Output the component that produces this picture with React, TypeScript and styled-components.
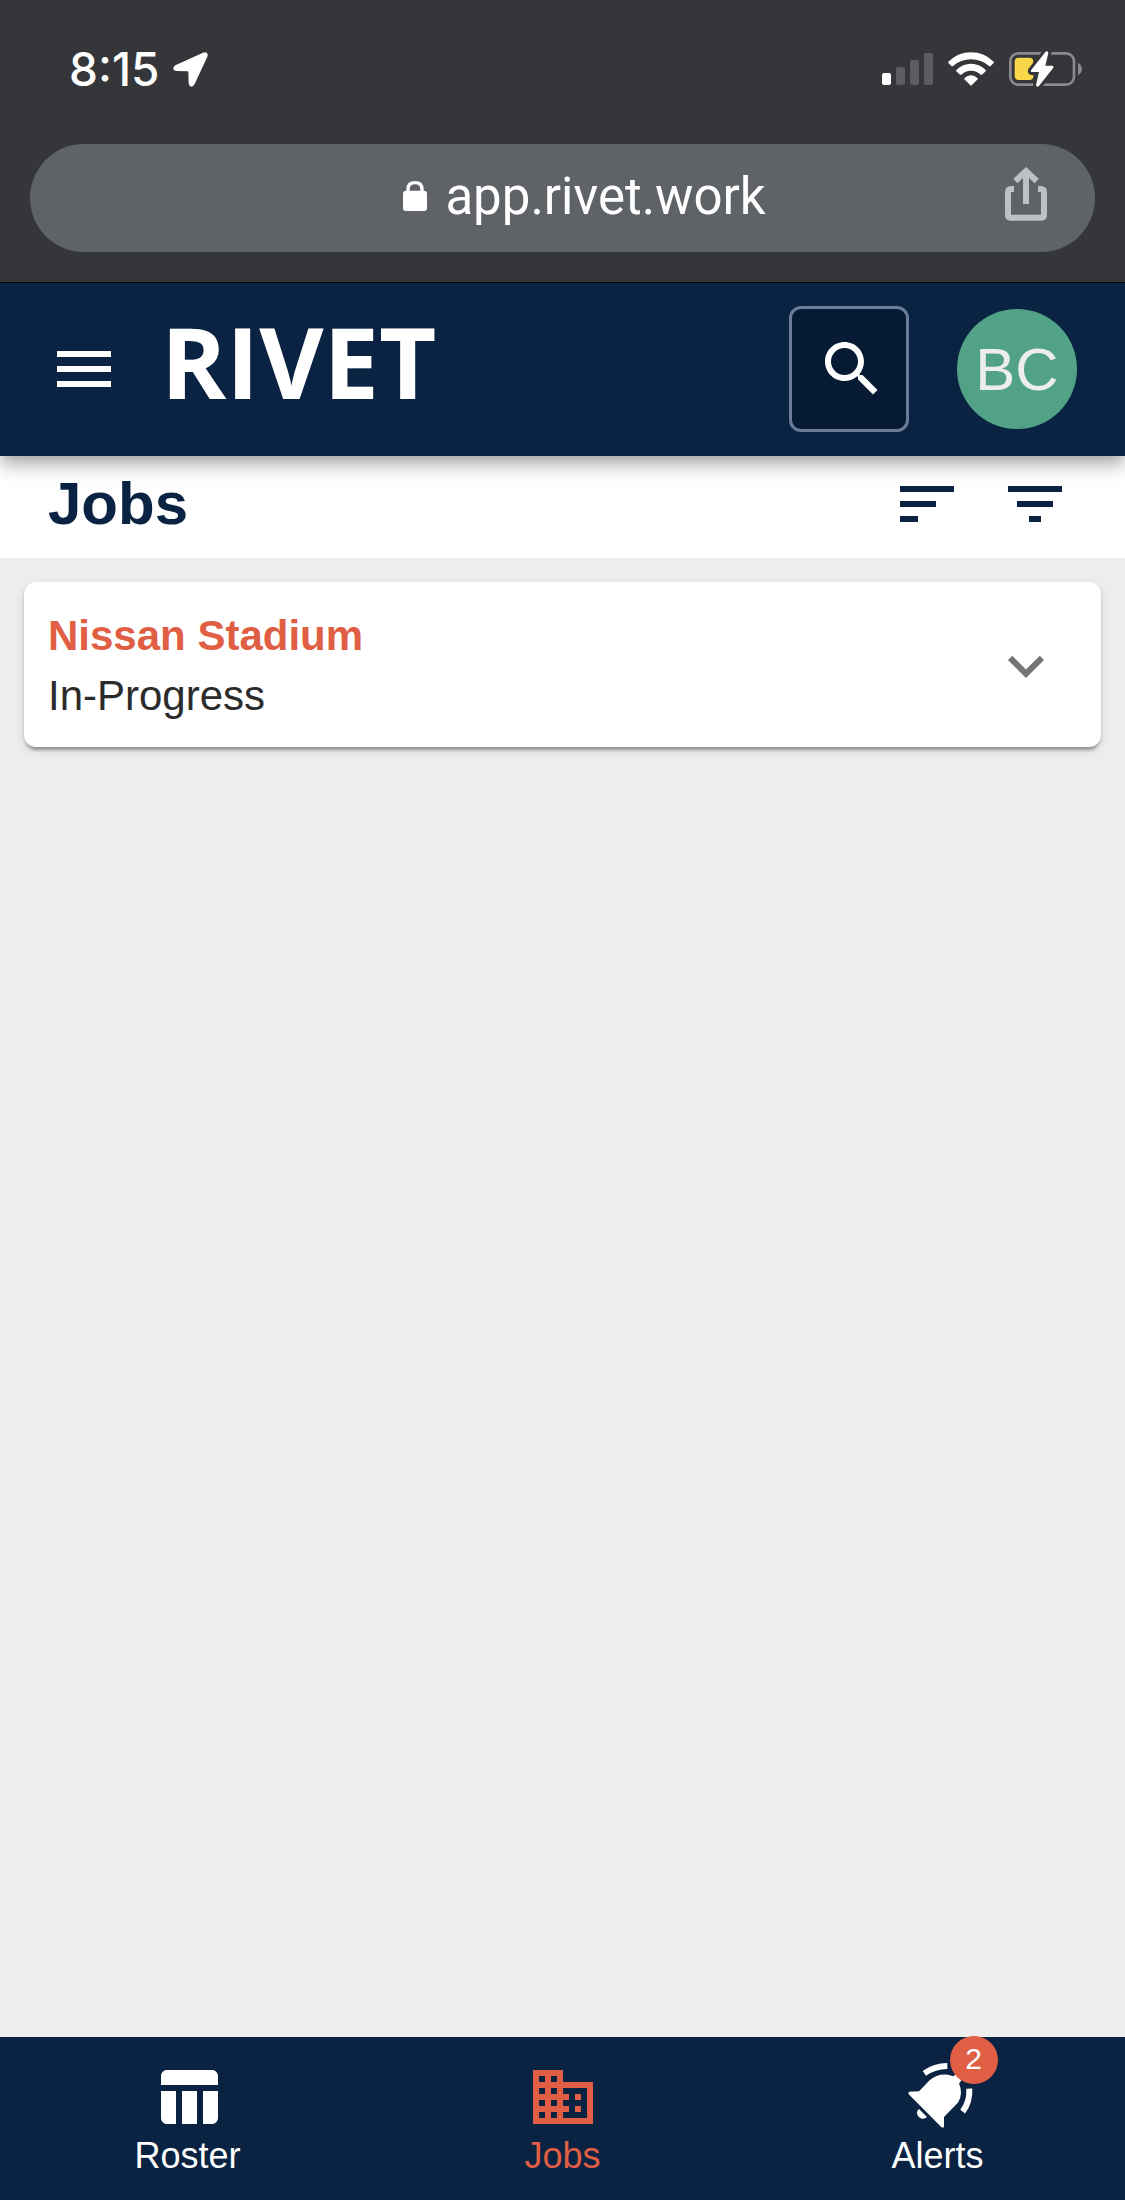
import React from "react";
import styled, { createGlobalStyle } from "styled-components";

const color = {
  chrome: "#35363a",
  pill: "#5f6368",
  navy: "#0a2342",
  orange: "#e05e43",
  green: "#52a287",
  page: "#ededed",
};

const GlobalStyle = createGlobalStyle`
  *, *::before, *::after { box-sizing: border-box; }
  body { margin: 0; background: ${color.page}; }
  button { border: 0; padding: 0; background: none; font: inherit; color: inherit; cursor: pointer; }
  a { color: inherit; text-decoration: none; }
  svg { display: block; flex: none; }
  h1, h2, p { margin: 0; }
`;

const Screen = styled.div`
  display: flex;
  flex-direction: column;
  min-height: 100vh;
  font-family: "Liberation Sans", Arial, Helvetica, sans-serif;
`;

const BrowserChrome = styled.div`
  position: relative;
  z-index: 2;
  padding: 0 30px 30px;
  background: ${color.chrome};
  border-bottom: 1px solid #000;
  color: #fff;
`;

const StatusBar = styled.div`
  display: flex;
  align-items: center;
  justify-content: space-between;
  height: 144px;
  padding: 0 13px 6px 39px;
`;

const Clock = styled.div`
  display: flex;
  align-items: center;
  gap: 14px;
  font-family: Inter, sans-serif;
  font-size: 46px;
  line-height: 54px;
  font-weight: 500;
`;

const StatusIcons = styled.div`
  display: flex;
  align-items: center;
  gap: 15px;
`;

const AddressBar = styled.div`
  display: flex;
  align-items: center;
  height: 108px;
  padding: 0 48px 0 134px;
  border-radius: 54px;
  background: ${color.pill};
`;

const Address = styled.a`
  flex: 1;
  display: flex;
  align-items: center;
  justify-content: center;
  gap: 18px;
  font-family: Roboto, sans-serif;
  font-size: 51px;
  line-height: 60px;
`;

const AddressText = styled.span`
  padding-bottom: 2px;
`;

const ShareButton = styled.button`
  flex: none;
`;

const AppBar = styled.header`
  position: relative;
  z-index: 1;
  display: flex;
  align-items: center;
  height: 173px;
  padding: 0 48px 1px;
  background: ${color.navy};
  color: #fff;
  box-shadow:
    0 6px 12px -3px rgba(0, 0, 0, 0.2),
    0 12px 15px 0 rgba(0, 0, 0, 0.14),
    0 3px 30px 0 rgba(0, 0, 0, 0.12);
`;

const Logo = styled.a`
  margin-left: 41px;
  padding-bottom: 16px;
  font-family: "Open Sans", sans-serif;
  font-size: 99px;
  line-height: 100px;
  font-weight: 700;
`;

const SearchButton = styled.button`
  display: flex;
  align-items: center;
  justify-content: center;
  width: 120px;
  height: 126px;
  margin-left: auto;
  && {
    padding-left: 6px;
    border: 3px solid #6b7c99;
    background: #071a33;
  }
  border-radius: 12px;
`;

const Avatar = styled.button`
  width: 120px;
  height: 120px;
  margin-left: 48px;
  border-radius: 50%;
  && {
    background: ${color.green};
    color: #ededed;
    font-size: 60px;
  }
`;

const TitleBar = styled.div`
  display: flex;
  align-items: center;
  justify-content: space-between;
  height: 102px;
  padding: 0 54px 6px 48px;
  background: #fff;
  color: ${color.navy};
`;

const PageTitle = styled.h1`
  font-size: 60px;
  line-height: 72px;
  font-weight: 700;
`;

const TitleActions = styled.div`
  display: flex;
  gap: 36px;
`;

const JobList = styled.main`
  flex: 1;
  padding: 24px;
  background: ${color.page};
`;

const JobCard = styled.article`
  display: flex;
  align-items: center;
  justify-content: space-between;
  padding: 24px 39px 21px 24px;
  border-radius: 12px;
  background: #fff;
  box-shadow:
    0 6px 3px -3px rgba(0, 0, 0, 0.2),
    0 3px 3px 0 rgba(0, 0, 0, 0.14),
    0 3px 9px 0 rgba(0, 0, 0, 0.12);
`;

const JobName = styled.h2`
  font-size: 42px;
  line-height: 60px;
  font-weight: 700;
  color: ${color.orange};
`;

const JobStatus = styled.p`
  font-size: 42px;
  line-height: 60px;
  color: #2b2b2b;
`;

const ExpandButton = styled.button`
  && {
    color: #757575;
  }
`;

const BottomNav = styled.nav`
  display: grid;
  grid-template-columns: repeat(3, 1fr);
  padding: 24px 0 21px;
  background: ${color.navy};
`;

const NavItem = styled.a<{ $active?: boolean }>`
  display: flex;
  flex-direction: column;
  align-items: center;
  && {
    color: ${(p) => (p.$active ? color.orange : "#fff")};
  }
  font-size: 36px;
  line-height: 46px;
`;

const IconSlot = styled.span`
  position: relative;
`;

const Badge = styled.span`
  position: absolute;
  top: -25px;
  left: 48px;
  width: 48px;
  height: 48px;
  border-radius: 50%;
  background: ${color.orange};
  color: #fff;
  font-size: 30px;
  line-height: 46px;
  text-align: center;
`;

const Icon = ({ d }: { d: string }) => (
  <svg width="72" height="72" viewBox="0 0 24 24" fill="currentColor" aria-hidden="true">
    <path d={d} />
  </svg>
);

const paths = {
  menu: "M3 18h18v-2H3v2zm0-5h18v-2H3v2zm0-7v2h18V6H3z",
  search:
    "M15.5 14h-.79l-.28-.27C15.41 12.59 16 11.11 16 9.5 16 5.91 13.09 3 9.5 3S3 5.91 3 9.5 5.91 16 9.5 16c1.61 0 3.09-.59 4.23-1.57l.27.28v.79l5 4.99L20.49 19l-4.99-5zm-6 0C7.01 14 5 11.99 5 9.5S7.01 5 9.5 5 14 7.01 14 9.5 11.99 14 9.5 14z",
  sort: "M3 18h6v-2H3v2zM3 6v2h18V6H3zm0 7h12v-2H3v2z",
  filter: "M10 18h4v-2h-4v2zM3 6v2h18V6H3zm3 7h12v-2H6v2z",
  expand: "M16.59 8.59L12 13.17 7.41 8.59 6 10l6 6 6-6z",
  roster:
    "M10 10.02h5V21h-5V10.02zM17 21h3c1.1 0 2-.9 2-2v-9h-5v11zm3-18H5c-1.1 0-2 .9-2 2v3h19V5c0-1.1-.9-2-2-2zM3 19c0 1.1.9 2 2 2h3V10H3v9z",
  jobs: "M12 7V3H2v18h20V7H12zM6 19H4v-2h2v2zm0-4H4v-2h2v2zm0-4H4V9h2v2zm0-4H4V5h2v2zm4 12H8v-2h2v2zm0-4H8v-2h2v2zm0-4H8V9h2v2zm0-4H8V5h2v2zm10 12h-8v-2h2v-2h-2v-2h2v-2h-2V9h8v10zm-2-8h-2v2h2v-2zm0 4h-2v2h2v-2z",
};

const LocationArrow = () => (
  <svg width="35" height="35" viewBox="0 0 105 105" fill="#fff" aria-hidden="true">
    <path d="M90 2 L7 40 Q-1 46 1 52 Q4 57 11 57 L44 58 Q46 58 46 61 L47 94 Q48 103 55 104 Q61 104 65 96 L103 14 Q106 6 101 2 Q97 -1 90 2Z" />
  </svg>
);

const Signal = () => (
  <svg width="51" height="34" viewBox="0 0 51 34" aria-label="Signal">
    <rect x="0" y="21" width="9" height="12" rx="2" fill="#fff" />
    <g fill="#5c5d60">
      <rect x="14" y="15" width="9" height="18" rx="2" />
      <rect x="28" y="8" width="9" height="25" rx="2" />
      <rect x="42" y="1" width="9" height="32" rx="2" />
    </g>
  </svg>
);

const Wifi = () => (
  <svg width="46" height="34" viewBox="264 65 138 102" fill="#fff" aria-label="Wi-Fi">
    <path d="M265 94 Q294 66 333 66 Q372 66 401 94 Q402 96 401 98 L391 108 Q389 109 387 107 Q364 87 333 87 Q302 87 279 107 Q277 109 275 108 L265 98 Q264 96 265 94Z" />
    <path d="M289 119 Q308 100 333 100 Q358 100 377 119 Q378 121 377 123 L366 133 Q364 134 362 133 Q350 121 333 121 Q316 121 304 133 Q302 134 300 133 L289 123 Q288 121 289 119Z" />
    <path d="M313 144 Q322 135 333 135 Q344 135 353 144 Q354 146 353 147 L335 165 Q333 167 331 165 L313 147 Q312 146 313 144Z" />
  </svg>
);

const Battery = () => (
  <svg width="73" height="36" viewBox="447 63 219 108" aria-label="Battery charging">
    <rect x="451" y="70" width="191" height="94" rx="24" fill="none" stroke="#8a8b8d" strokeWidth="8" />
    <path d="M654 98 Q666 105 666 117 Q666 129 654 136Z" fill="#8a8b8d" />
    <rect x="464" y="83" width="56" height="67" rx="12" fill="#fad749" />
    <path
      d="M558 64 L513 121 Q511 126 516 126 L537 126 L528 165 Q530 173 537 168 L580 113 Q581 107 576 107 L556 107 L565 69 Q564 62 558 64Z"
      fill="#fff"
      stroke={color.chrome}
      strokeWidth="18"
      strokeLinejoin="round"
      paintOrder="stroke"
    />
  </svg>
);

const Lock = () => (
  <svg width="24" height="34" viewBox="72 153 72 102" aria-hidden="true">
    <rect x="72" y="182" width="72" height="61" rx="9" fill="#fff" />
    <path d="M87 185 V178 Q87 158 108 158 Q129 158 129 178 V185" fill="none" stroke="#fff" strokeWidth="10" />
  </svg>
);

const Share = () => (
  <svg width="42" height="64" viewBox="135 108 126 192" fill="none" stroke="#bdc1c6" strokeWidth="18" aria-hidden="true">
    <path d="M162 177 H154 Q144 177 144 187 V255 Q144 263 152 263 H244 Q252 263 252 255 V187 Q252 177 242 177 H234" />
    <path d="M198 222 V124 M166 153 L198 123 L230 153" />
  </svg>
);

const Bell = () => (
  <svg width="72" height="72" viewBox="120 153 216 216" fill="#fff" aria-hidden="true">
    <path d="M141 245 L171 244 L203 211 Q226 190 258 194 L274 199 Q279 192 290 193 Q299 198 298 209 Q296 216 291 220 Q304 250 289 276 Q284 283 276 290 L246 321 L246 350 Q242 355 237 350 L140 253 Q138 248 141 245Z" />
    <path d="M171 297 L195 321 Q189 328 179 326 Q164 320 165 307 Q167 300 171 297Z" />
    <path d="M187 190 Q218 168 256 168 M322 236 Q324 276 302 305" fill="none" stroke="#fff" strokeWidth="18" />
  </svg>
);

export default function App() {
  return (
    <>
      <GlobalStyle />
      <Screen>
        <BrowserChrome>
          <StatusBar>
            <Clock>
              8:15
              <LocationArrow />
            </Clock>
            <StatusIcons>
              <Signal />
              <Wifi />
              <Battery />
            </StatusIcons>
          </StatusBar>
          <AddressBar>
            <Address href="#">
              <Lock />
              <AddressText>app.rivet.work</AddressText>
            </Address>
            <ShareButton aria-label="Share">
              <Share />
            </ShareButton>
          </AddressBar>
        </BrowserChrome>
        <AppBar>
          <button aria-label="Menu">
            <Icon d={paths.menu} />
          </button>
          <Logo href="#">RIVET</Logo>
          <SearchButton aria-label="Search">
            <Icon d={paths.search} />
          </SearchButton>
          <Avatar>BC</Avatar>
        </AppBar>
        <TitleBar>
          <PageTitle>Jobs</PageTitle>
          <TitleActions>
            <button aria-label="Sort">
              <Icon d={paths.sort} />
            </button>
            <button aria-label="Filter">
              <Icon d={paths.filter} />
            </button>
          </TitleActions>
        </TitleBar>
        <JobList>
          <JobCard>
            <div>
              <JobName>Nissan Stadium</JobName>
              <JobStatus>In-Progress</JobStatus>
            </div>
            <ExpandButton aria-label="Show details">
              <Icon d={paths.expand} />
            </ExpandButton>
          </JobCard>
        </JobList>
        <BottomNav>
          <NavItem href="#">
            <Icon d={paths.roster} />
            Roster
          </NavItem>
          <NavItem href="#" $active aria-current="page">
            <Icon d={paths.jobs} />
            Jobs
          </NavItem>
          <NavItem href="#">
            <IconSlot>
              <Bell />
              <Badge>2</Badge>
            </IconSlot>
            Alerts
          </NavItem>
        </BottomNav>
      </Screen>
    </>
  );
}
